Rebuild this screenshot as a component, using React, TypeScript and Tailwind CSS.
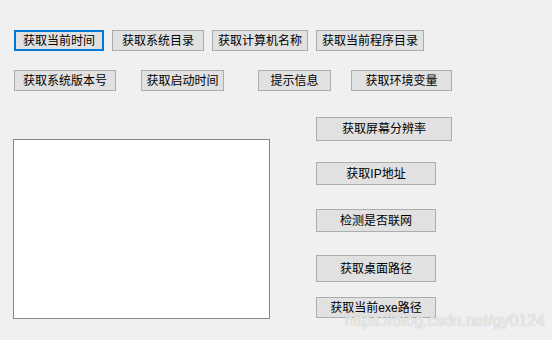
const WinButton = ({ label, className = '' }: { label: string; className?: string }) => (
  <button
    className={`flex items-center justify-center border border-[#adadad] bg-[#e1e1e1] text-[12px] leading-none text-black ${className}`}
  >
    {label}
  </button>
)

const App = () => {
  return (
    <div className="relative h-[340px] w-[552px] overflow-hidden bg-[#f0f0f0] font-['Liberation_Sans','Noto_Sans_CJK_SC',sans-serif]">
      <div className="flex gap-2 pl-[14px] pt-[30px]">
        <button className="flex h-[21px] w-[90px] items-center justify-center border-2 border-[#0078d7] bg-[#e1e1e1] text-[12px] leading-none text-black">
          获取当前时间
        </button>
        <WinButton label="获取系统目录" className="h-[21px] w-[92px]" />
        <WinButton label="获取计算机名称" className="h-[21px] w-[96px]" />
        <WinButton label="获取当前程序目录" className="h-[21px] w-[108px]" />
      </div>

      <div className="mt-[19px] flex pl-[14px]">
        <WinButton label="获取系统版本号" className="h-[21px] w-[102px]" />
        <WinButton label="获取启动时间" className="ml-[25px] h-[21px] w-[83px]" />
        <WinButton label="提示信息" className="ml-[34px] h-[21px] w-[73px]" />
        <WinButton label="获取环境变量" className="ml-[20px] h-[21px] w-[101px]" />
      </div>

      <div className="flex items-start pl-[13px]">
        <div className="mt-[48px] h-[180px] w-[257px] border border-[#828790] bg-white" />

        <div className="ml-[46px] mt-[26px] flex flex-col">
          <WinButton label="获取屏幕分辨率" className="h-[24px] w-[136px]" />
          <WinButton label="获取IP地址" className="mt-[21px] h-[23px] w-[120px]" />
          <WinButton label="检测是否联网" className="mt-[24px] h-[23px] w-[120px]" />
          <WinButton label="获取桌面路径" className="mt-[23px] h-[27px] w-[120px]" />
          <WinButton label="获取当前exe路径" className="mt-[15px] h-[21px] w-[120px]" />
        </div>
      </div>

      <div className="pointer-events-none absolute left-[345px] top-[311px] font-['Liberation_Sans',sans-serif] text-[16px] leading-5 text-white/80 [text-shadow:0_0_1px_#9a9a9a]">
        https://blog.csdn.net/gy0124
      </div>
    </div>
  )
}

export default App
